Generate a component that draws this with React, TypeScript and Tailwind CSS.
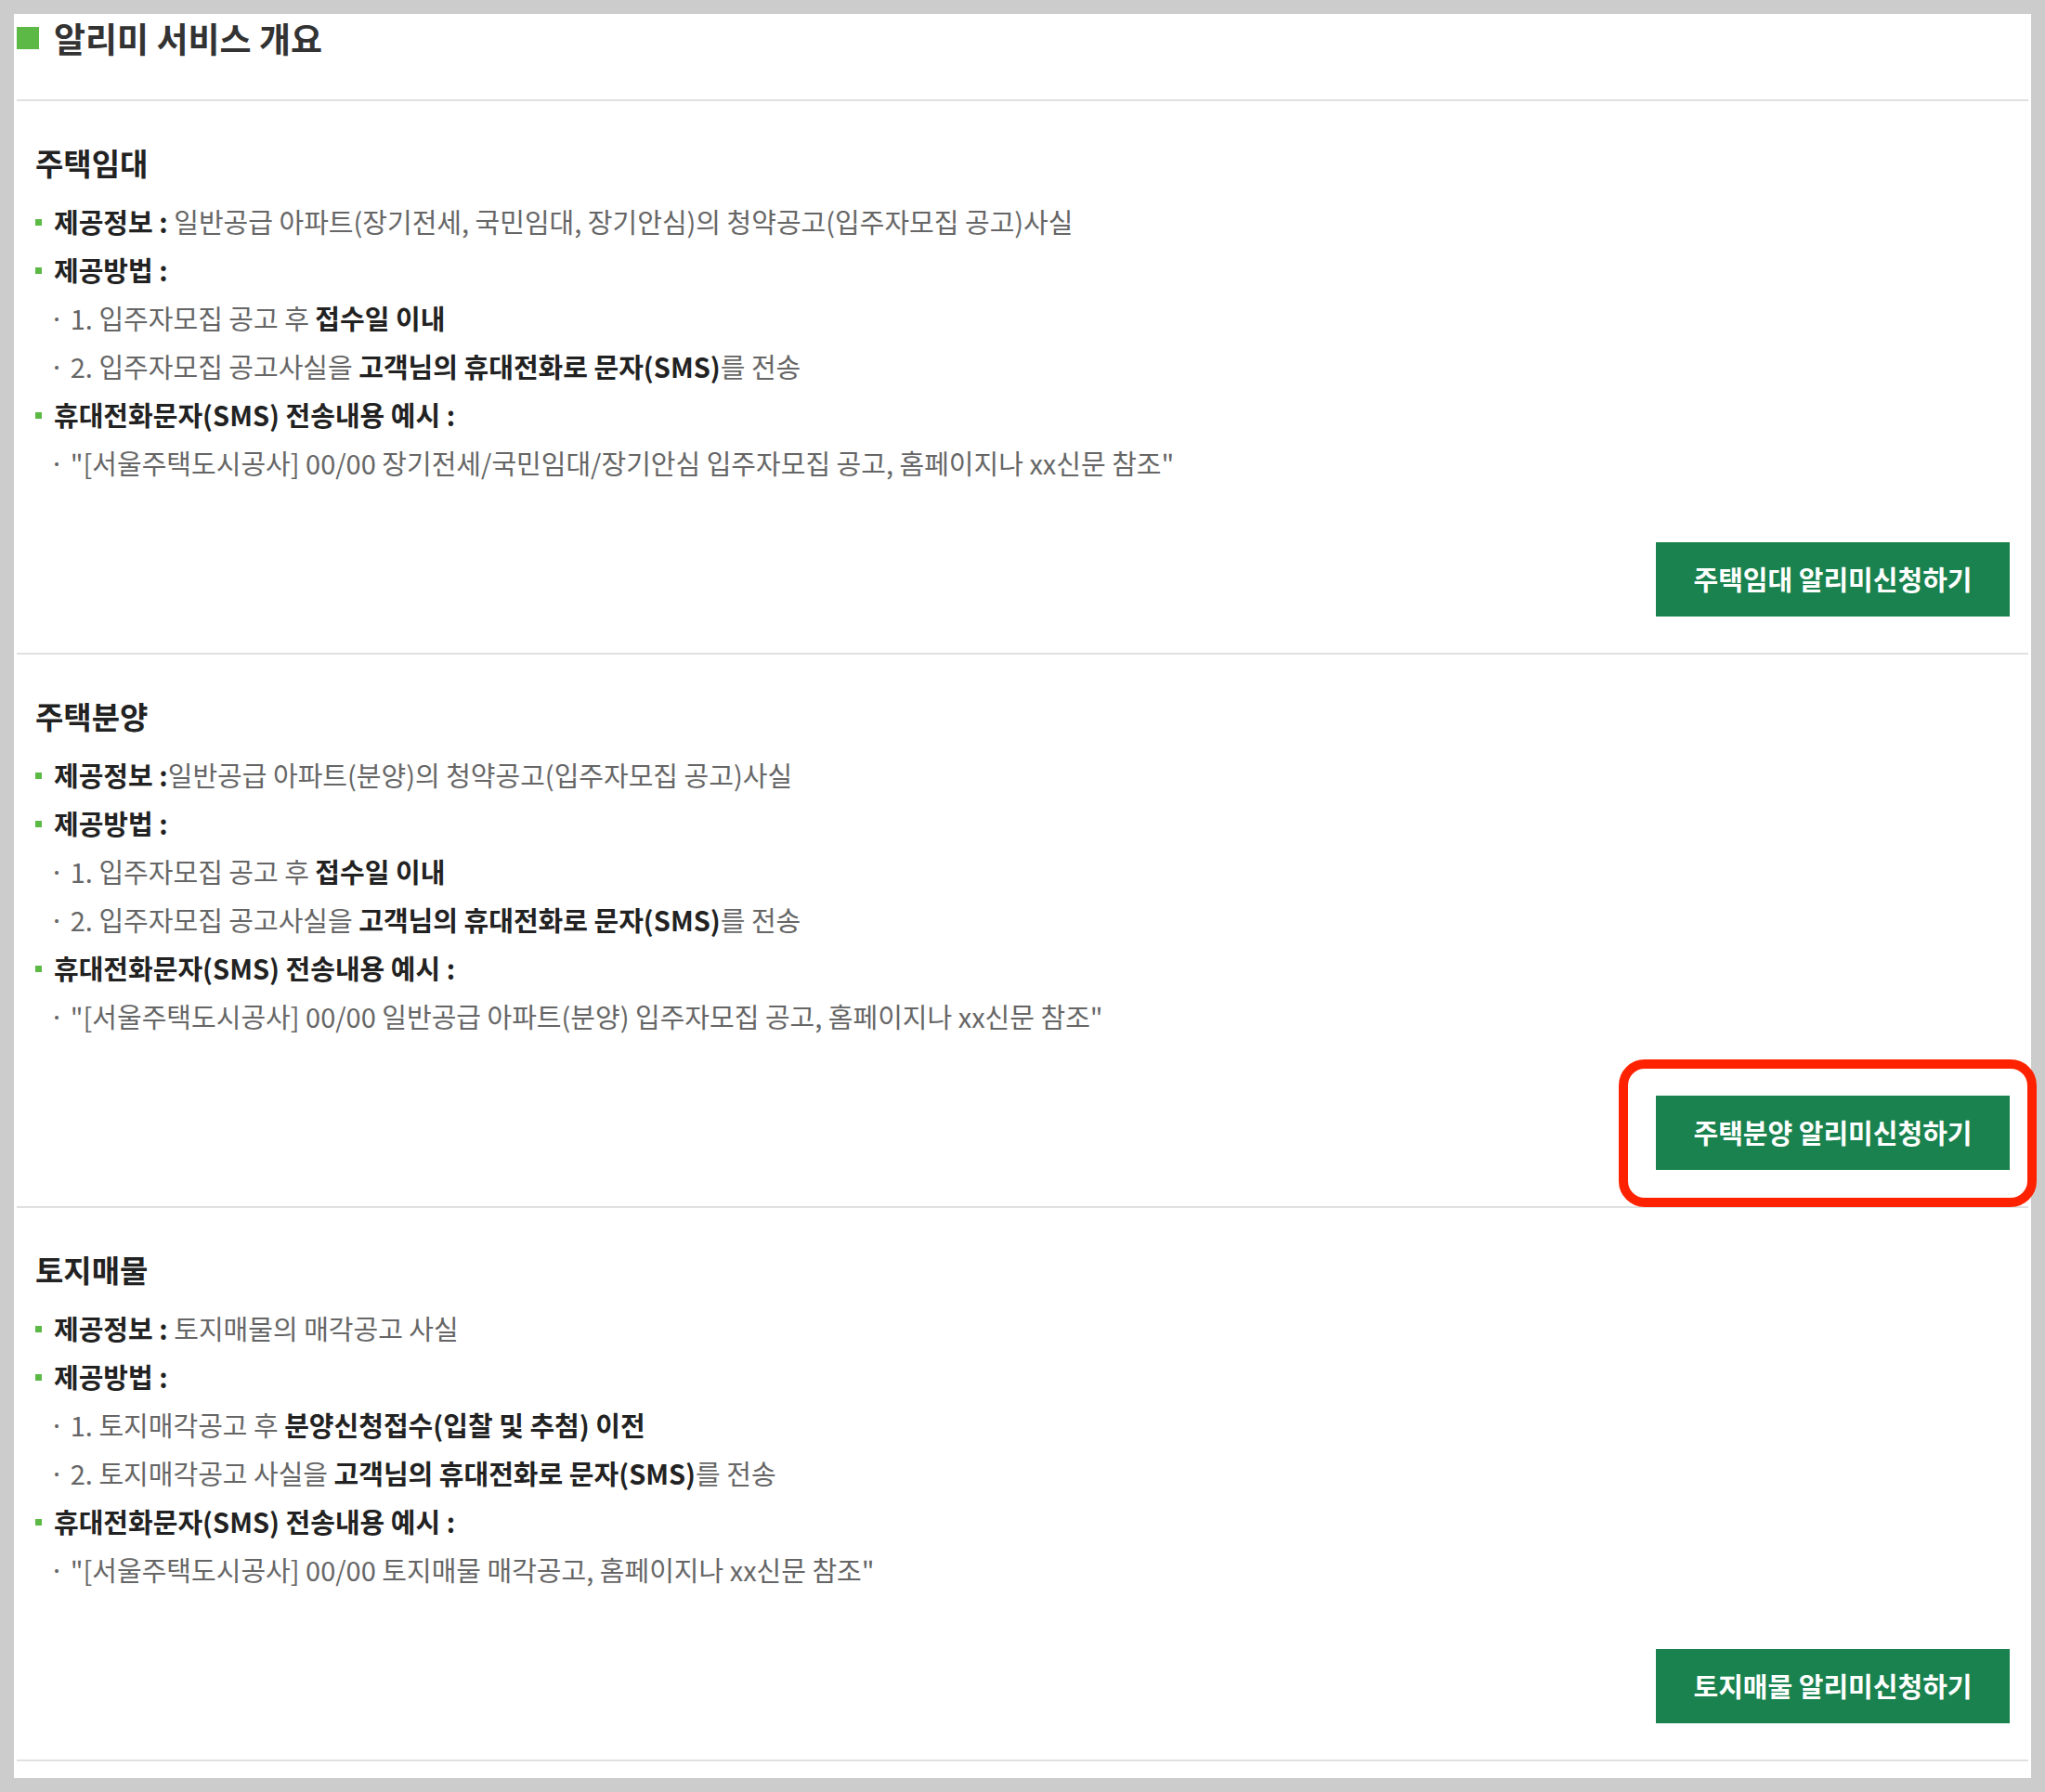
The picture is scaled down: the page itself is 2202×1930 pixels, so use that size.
import React from "react";

type Seg = { t: string; b?: boolean };

type Section = {
  title: string;
  info: string;
  m1: Seg[];
  m2: Seg[];
  ex: string;
  btn: string;
  highlight?: boolean;
};

const sections: Section[] = [
  {
    title: "주택임대",
    info: " 일반공급 아파트(장기전세, 국민임대, 장기안심)의 청약공고(입주자모집 공고)사실",
    m1: [{ t: "1. 입주자모집 공고 후 " }, { t: "접수일 이내", b: true }],
    m2: [
      { t: "2. 입주자모집 공고사실을 " },
      { t: "고객님의 휴대전화로 문자(SMS)", b: true },
      { t: "를 전송" },
    ],
    ex: "\"[서울주택도시공사] 00/00 장기전세/국민임대/장기안심 입주자모집 공고, 홈페이지나 xx신문 참조\"",
    btn: "주택임대 알리미신청하기",
  },
  {
    title: "주택분양",
    info: "일반공급 아파트(분양)의 청약공고(입주자모집 공고)사실",
    m1: [{ t: "1. 입주자모집 공고 후 " }, { t: "접수일 이내", b: true }],
    m2: [
      { t: "2. 입주자모집 공고사실을 " },
      { t: "고객님의 휴대전화로 문자(SMS)", b: true },
      { t: "를 전송" },
    ],
    ex: "\"[서울주택도시공사] 00/00 일반공급 아파트(분양) 입주자모집 공고, 홈페이지나 xx신문 참조\"",
    btn: "주택분양 알리미신청하기",
    highlight: true,
  },
  {
    title: "토지매물",
    info: " 토지매물의 매각공고 사실",
    m1: [{ t: "1. 토지매각공고 후 " }, { t: "분양신청접수(입찰 및 추첨) 이전", b: true }],
    m2: [
      { t: "2. 토지매각공고 사실을 " },
      { t: "고객님의 휴대전화로 문자(SMS)", b: true },
      { t: "를 전송" },
    ],
    ex: "\"[서울주택도시공사] 00/00 토지매물 매각공고, 홈페이지나 xx신문 참조\"",
    btn: "토지매물 알리미신청하기",
  },
];

function BulletRow({ label, rest }: { label: string; rest?: string }) {
  return (
    <div className="flex h-[52px] items-center pl-[20px] whitespace-pre">
      <span className="mr-[13px] h-[7px] w-[7px] shrink-0 bg-[#5cb946]" />
      <span className="font-bold text-[#222222]">{label}</span>
      {rest ? <span className="text-[#666666]">{rest}</span> : null}
    </div>
  );
}

function SubRow({ segs }: { segs: Seg[] }) {
  return (
    <div className="flex h-[52px] items-center pl-[35px] whitespace-pre text-[#666666]">
      <span>{"· "}</span>
      {segs.map((s, i) => (
        <span key={i} className={s.b ? "font-bold text-[#222222]" : ""}>
          {s.t}
        </span>
      ))}
    </div>
  );
}

function SectionBlock({ s }: { s: Section }) {
  return (
    <div className="flex flex-col border-b-2 border-[#e0e0e0] pt-[45px] pb-[39px]">
      <h3 className="flex h-[44px] items-center pl-[20px] text-[33px] font-bold text-[#222222]">
        {s.title}
      </h3>
      <div className="mt-[15px] flex flex-col text-[29px]">
        <BulletRow label="제공정보 :" rest={s.info} />
        <BulletRow label="제공방법 :" />
        <SubRow segs={s.m1} />
        <SubRow segs={s.m2} />
        <BulletRow label="휴대전화문자(SMS) 전송내용 예시 :" />
        <SubRow segs={[{ t: s.ex }]} />
      </div>
      <div className="relative mt-[59px] mr-[20px] self-end">
        <button className="flex h-[80px] w-[381px] items-center justify-center bg-[#19824e] text-[29px] font-bold text-white">
          {s.btn}
        </button>
        {s.highlight ? (
          <div className="pointer-events-none absolute -left-[40px] -top-[39px] h-[159px] w-[450px] rounded-[28px] border-[10px] border-[#ff2200]" />
        ) : null}
      </div>
    </div>
  );
}

export default function App() {
  return (
    <div className="min-h-[1930px] w-[2202px] bg-[#cccccc] p-[15px] font-['Noto_Sans_CJK_KR','Noto_Sans',sans-serif]">
      <div className="bg-white px-[3px] pb-[18px]">
        <div className="flex border-b-2 border-[#e0e0e0] pt-[1px] pb-[39px]">
          <span className="mt-[13px] h-[24px] w-[24px] bg-[#5cb946]" />
          <h2 className="ml-[16px] flex h-[52px] items-center text-[37px] font-bold text-[#333333]">
            알리미 서비스 개요
          </h2>
        </div>
        {sections.map((s) => (
          <SectionBlock key={s.title} s={s} />
        ))}
      </div>
    </div>
  );
}
